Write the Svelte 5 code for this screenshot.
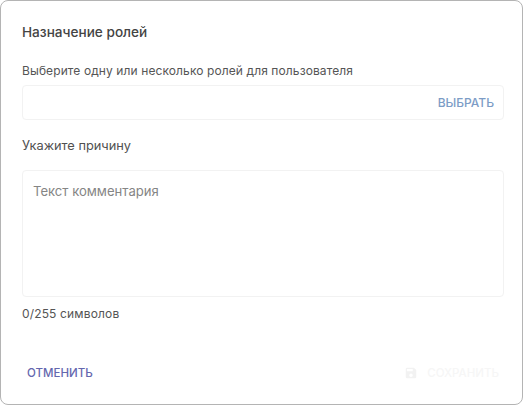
<script>
  const max = 255;
  let comment = '';
</script>

<div class="dialog">
  <h2 class="title">Назначение ролей</h2>
  <div class="hint">Выберите одну или несколько ролей для пользователя</div>
  <div class="select">
    <span class="pick">ВЫБРАТЬ</span>
  </div>
  <div class="reason">Укажите причину</div>
  <div class="area"><span class="placeholder">Текст комментария</span></div>
  <div class="count">{comment.length}/{max} символов</div>
  <div class="actions">
    <span class="cancel">ОТМЕНИТЬ</span>
    <span class="save">
      <svg width="14" height="14" viewBox="0 0 24 24" aria-hidden="true"><path fill="#f2f2f2" d="M17 3H5a2 2 0 0 0-2 2v14a2 2 0 0 0 2 2h14a2 2 0 0 0 2-2V7l-4-4zm-5 16a3 3 0 1 1 0-6 3 3 0 0 1 0 6zm3-10H5V5h10v4z"/></svg>
      СОХРАНИТЬ
    </span>
  </div>
</div>

<style>
  :global(body) {
    margin: 0;
    background: #fff;
  }
  .dialog {
    box-sizing: border-box;
    width: 523px;
    height: 405px;
    border: 1px solid #b4b4b4;
    border-radius: 8px;
    background: #fff;
    padding: 22px 18px 0 21px;
    font-family: Inter, "Noto Sans", sans-serif;
    display: flex;
    flex-direction: column;
  }
  .title {
    margin: 0;
    font-size: 13.6px;
    line-height: 18px;
    font-weight: 500;
    color: #444;
  }
  .hint {
    margin-top: 22px;
    font-size: 12px;
    letter-spacing: 0.1px;
    line-height: 16px;
    color: #555;
  }
  .select {
    box-sizing: border-box;
    margin-top: 6px;
    height: 35px;
    border: 1px solid #f2f2f2;
    border-radius: 4px;
    display: flex;
    align-items: center;
    justify-content: flex-end;
    padding-right: 9px;
  }
  .pick {
    font-size: 12px;
    font-weight: 500;
    color: #7c9cc6;
  }
  .reason {
    margin-top: 17px;
    font-size: 12.8px;
    line-height: 18px;
    color: #505050;
  }
  .area {
    box-sizing: border-box;
    margin-top: 15px;
    height: 127px;
    border: 1px solid #f2f2f2;
    border-radius: 4px;
    padding: 11px 10px;
  }
  .placeholder {
    font-size: 13.1px;
    line-height: 18px;
    color: #858585;
    display: block;
  }
  .count {
    margin-top: 9px;
    font-size: 12px;
    letter-spacing: 0.15px;
    line-height: 16px;
    color: #555;
  }
  .actions {
    margin-top: 43px;
    display: flex;
    justify-content: space-between;
    align-items: center;
    padding: 0 5px 0 5px;
  }
  .cancel {
    font-size: 11.5px;
    font-weight: 500;
    color: #6467ae;
    line-height: 16px;
  }
  .save {
    display: flex;
    align-items: center;
    gap: 9px;
    font-size: 11.5px;
    line-height: 16px;
    font-weight: 500;
    color: #f6f6f6;
  }
</style>
